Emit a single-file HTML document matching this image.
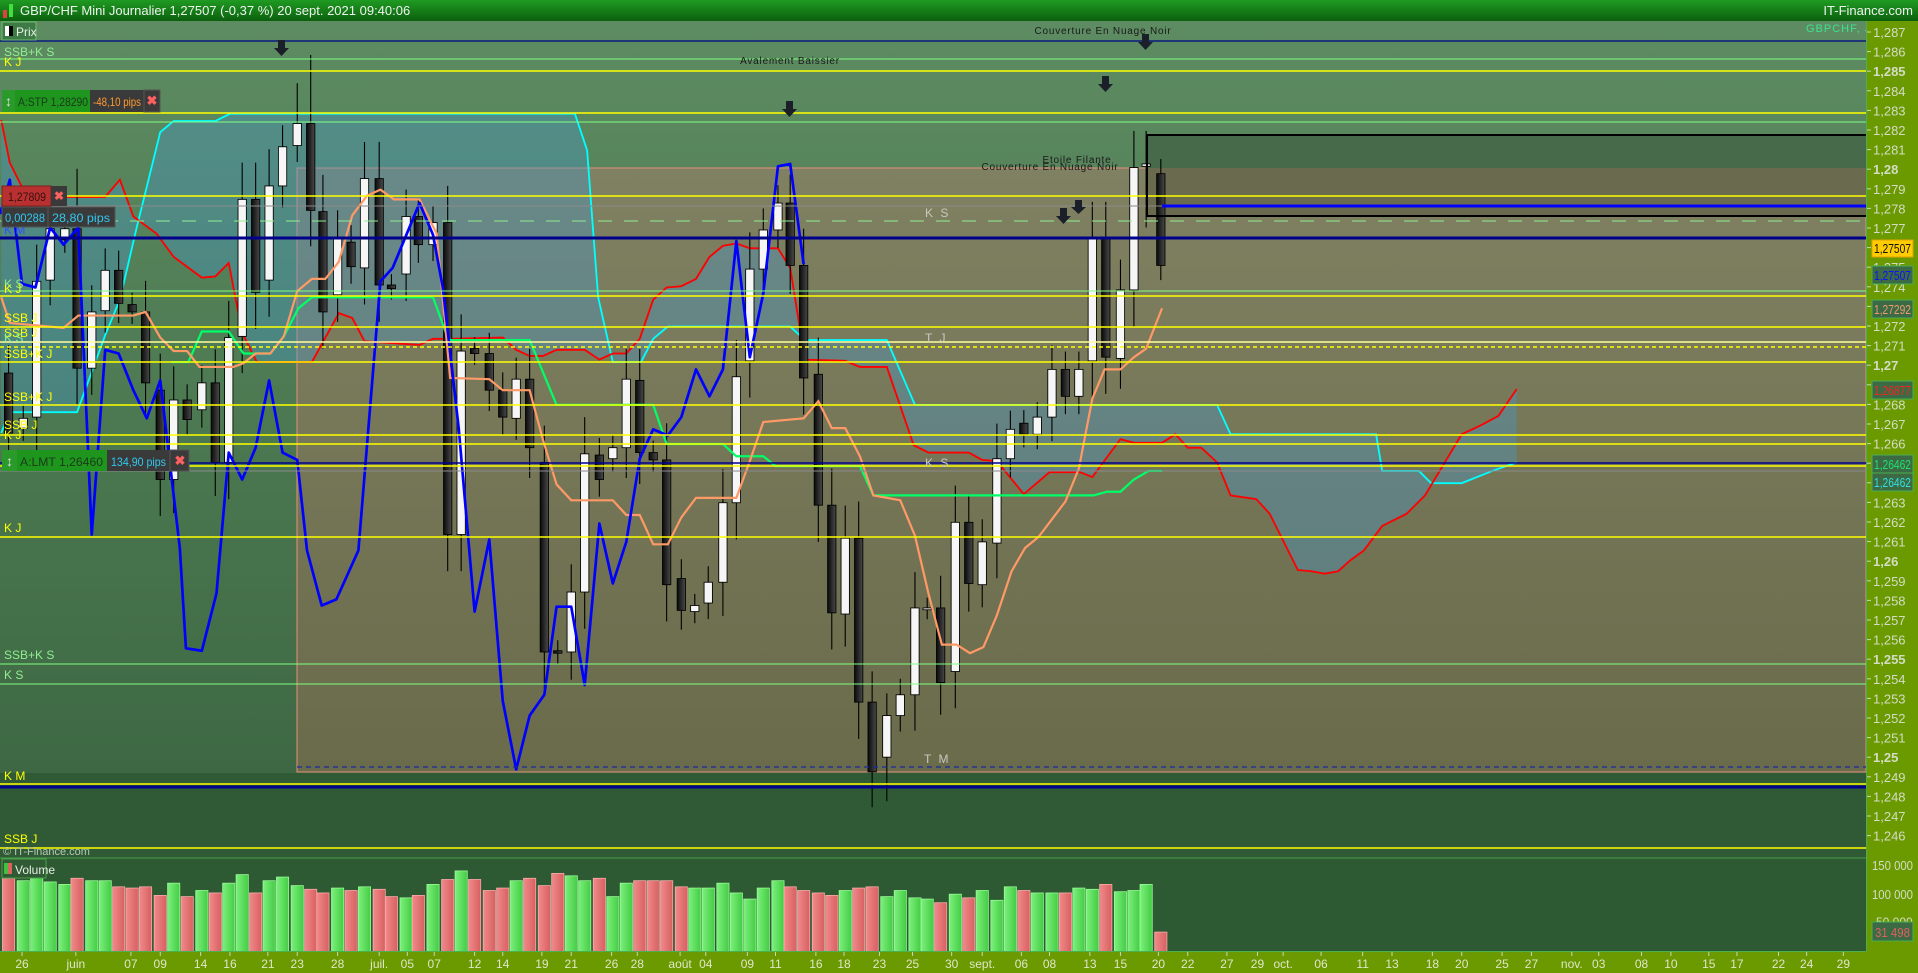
<!DOCTYPE html>
<html><head><meta charset="utf-8"><style>
html,body{margin:0;padding:0;width:1918px;height:973px;overflow:hidden;background:#2e5a33;font-family:"Liberation Sans",sans-serif}
svg{display:block}
</style></head><body>
<svg id="s" width="1918" height="973" viewBox="0 0 1918 973" xmlns="http://www.w3.org/2000/svg" font-family="Liberation Sans, sans-serif">
<defs>
<linearGradient id="tb" x1="0" y1="0" x2="0" y2="1"><stop offset="0" stop-color="#1f9a22"/><stop offset="1" stop-color="#0c600e"/></linearGradient>
<linearGradient id="bg" x1="0" y1="0" x2="0" y2="1"><stop offset="0" stop-color="#5e8c62"/><stop offset="1" stop-color="#3d6843"/></linearGradient>
<linearGradient id="ol" x1="0" y1="0" x2="0" y2="1"><stop offset="0" stop-color="#7f8162"/><stop offset="1" stop-color="#6a6b4b"/></linearGradient>
<linearGradient id="bk" x1="0" y1="0" x2="1" y2="0"><stop offset="0" stop-color="#0a0a0a"/><stop offset="1" stop-color="#4a4a4a"/></linearGradient>
<linearGradient id="vr" x1="0" y1="0" x2="1" y2="0"><stop offset="0" stop-color="#f08a8a"/><stop offset="1" stop-color="#d86060"/></linearGradient>
<linearGradient id="vg" x1="0" y1="0" x2="1" y2="0"><stop offset="0" stop-color="#7cf07c"/><stop offset="1" stop-color="#44cc44"/></linearGradient>
</defs>
<rect x="0" y="0" width="1918" height="21" fill="url(#tb)"/>
<rect x="3" y="10" width="4" height="8" fill="#e04040"/><rect x="9" y="4" width="4" height="13" fill="#40e040"/>
<text x="20" y="15" font-size="13" fill="#eef4ee">GBP/CHF Mini Journalier 1,27507 (-0,37 %) 20 sept. 2021 09:40:06</text>
<text x="1913" y="15" font-size="13" fill="#eef4ee" text-anchor="end">IT-Finance.com</text>
<rect x="0" y="21" width="1866" height="752" fill="url(#bg)"/>
<rect x="0" y="773" width="1866" height="85" fill="#2f5a35"/>
<rect x="297" y="168" width="1569" height="604" fill="url(#ol)" stroke="#e8907a" stroke-width="1"/>
<rect x="1147" y="136" width="719" height="32" fill="#476a4a"/>
<rect x="1147" y="168" width="719" height="48" fill="#6a6a4e"/>
<g id="ind" transform="scale(1.2232)"></g>
<g fill="none">
<line x1="0" y1="41" x2="1866" y2="41" stroke="#0a1a80" stroke-width="1.5"/>
<line x1="0" y1="59" x2="1866" y2="59" stroke="#80ff80"/>
<line x1="0" y1="71" x2="1866" y2="71" stroke="#ffff00" stroke-width="1.5"/>
<line x1="0" y1="113" x2="1866" y2="113" stroke="#ffff00" stroke-width="1.5"/>
<line x1="0" y1="122" x2="1866" y2="122" stroke="#80ff80"/>
<line x1="0" y1="196" x2="1866" y2="196" stroke="#ffff00" stroke-width="1.5"/>
<line x1="0" y1="206" x2="1866" y2="206" stroke="#8a8a8a"/>
<line x1="1162" y1="206" x2="1866" y2="206" stroke="#0000ff" stroke-width="3"/>
<line x1="0" y1="221" x2="1866" y2="221" stroke="#90ee90" stroke-dasharray="14,12"/>
<line x1="0" y1="238" x2="1866" y2="238" stroke="#00008b" stroke-width="3"/>
<line x1="0" y1="291" x2="1866" y2="291" stroke="#80ff80"/>
<line x1="0" y1="296" x2="1866" y2="296" stroke="#ffff00" stroke-width="1.5"/>
<line x1="0" y1="327" x2="1866" y2="327" stroke="#ffff00" stroke-width="1.5"/>
<line x1="0" y1="342" x2="1866" y2="342" stroke="#ffff99" stroke-width="1.5"/>
<line x1="0" y1="347" x2="1866" y2="347" stroke="#ffff00" stroke-width="1.5" stroke-dasharray="4,3"/>
<line x1="0" y1="362" x2="1866" y2="362" stroke="#ffff00" stroke-width="1.5"/>
<line x1="0" y1="405" x2="1866" y2="405" stroke="#ffff00" stroke-width="1.5"/>
<line x1="0" y1="435" x2="1866" y2="435" stroke="#ffff00" stroke-width="1.5"/>
<line x1="0" y1="444" x2="1866" y2="444" stroke="#ffff00" stroke-width="1.5"/>
<line x1="0" y1="463" x2="1866" y2="463" stroke="#00008b" stroke-width="1.5"/>
<line x1="0" y1="466" x2="1866" y2="466" stroke="#ffff00" stroke-width="1.5"/>
<line x1="0" y1="471" x2="1866" y2="471" stroke="#8a8a8a"/>
<line x1="0" y1="537" x2="1866" y2="537" stroke="#ffff00" stroke-width="1.5"/>
<line x1="0" y1="664" x2="1866" y2="664" stroke="#80ff80"/>
<line x1="0" y1="684" x2="1866" y2="684" stroke="#80ff80"/>
<line x1="297" y1="767" x2="1866" y2="767" stroke="#1a2aa0" stroke-width="1.2" stroke-dasharray="5,4"/>
<line x1="0" y1="784" x2="1866" y2="784" stroke="#ffff00" stroke-width="1.5"/>
<line x1="0" y1="787" x2="1866" y2="787" stroke="#00008b" stroke-width="3"/>
<line x1="0" y1="848" x2="1866" y2="848" stroke="#ffff00" stroke-width="1.5"/>
<line x1="0" y1="858" x2="1866" y2="858" stroke="#4aa04a"/>
<rect x="1147" y="135" width="725" height="81" fill="none" stroke="#000" stroke-width="2"/>
</g>
<g font-size="12">
<text x="4" y="56" fill="#90ee90">SSB+K S</text>
<text x="4" y="66" fill="#ffff00">K J</text>
<text x="4" y="234" fill="#3050ff">K M</text>
<text x="4" y="288" fill="#90ee90">K S</text>
<text x="4" y="293" fill="#ffff00">K J</text>
<text x="4" y="322" fill="#ffff00">SSB J</text>
<text x="4" y="337" fill="#ffff00">SSB J</text>
<text x="4" y="342" fill="#90ee90">K S</text>
<text x="4" y="358" fill="#ffff00">SSB+K J</text>
<text x="4" y="401" fill="#ffff00">SSB+K J</text>
<text x="4" y="429" fill="#ffff00">SSB J</text>
<text x="4" y="439" fill="#ffff00">K J</text>
<text x="4" y="532" fill="#ffff00">K J</text>
<text x="4" y="659" fill="#90ee90">SSB+K S</text>
<text x="4" y="679" fill="#90ee90">K S</text>
<text x="4" y="780" fill="#ffff00">K M</text>
<text x="4" y="843" fill="#ffff00">SSB J</text>
</g>
<text x="3" y="855" font-size="11" fill="#b8c8b8">© IT-Finance.com</text>
<g font-size="12" fill="#c8c8c0" letter-spacing="2">
<text x="925" y="217">K S</text><text x="925" y="342">T J</text><text x="925" y="467">K S</text><text x="924" y="763">T M</text>
</g>
<g font-size="10" fill="#1a1a1a" letter-spacing="0.8">
<text x="1103" y="34" text-anchor="middle">Couverture En Nuage Noir</text>
<text x="790" y="64" text-anchor="middle">Avalement Baissier</text>
<text x="1077" y="163" text-anchor="middle">Etoile Filante</text>
<text x="1050" y="170" text-anchor="middle">Couverture En Nuage Noir</text>
</g>
<g fill="#1a1f2a">
<path d="M278 40h7v8h4l-7.5 8-7.5-8h4z"/>
<path d="M786 101h7v8h4l-7.5 8-7.5-8h4z"/>
<path d="M1102 76h7v8h4l-7.5 8-7.5-8h4z"/>
<path d="M1142 34h7v8h4l-7.5 8-7.5-8h4z"/>
<path d="M1060 208h7v8h4l-7.5 8-7.5-8h4z"/>
<path d="M1075 200h7v7h4l-7.5 7-7.5-7h4z"/>
</g>
<text x="1806" y="32" font-size="11" fill="#40e090" letter-spacing="1">GBPCHF, J</text>
<rect x="2" y="22" width="34" height="18" fill="#3d7a45" stroke="#6cbf6c"/>
<rect x="5" y="26" width="4" height="10" fill="#fff"/><rect x="9" y="26" width="4" height="10" fill="#000"/>
<text x="16" y="36" font-size="12" fill="#e8f0e8">Prix</text>
<rect x="2" y="90" width="13" height="22" fill="#2a9a2a"/>
<text x="8.5" y="106" font-size="14" fill="#ddd" text-anchor="middle">↕</text>
<rect x="15" y="90" width="75" height="22" fill="#1e961e"/>
<text x="18" y="106" font-size="12" fill="#1a3a1a" textLength="70" lengthAdjust="spacingAndGlyphs">A:STP   1,28290</text>
<rect x="90" y="90" width="54" height="22" fill="#3a3a3a"/>
<text x="93" y="106" font-size="12" fill="#ff9a30" textLength="48" lengthAdjust="spacingAndGlyphs">-48,10 pips</text>
<rect x="144" y="90" width="16" height="22" fill="#3a3a3a" stroke="#555"/>
<text x="152" y="105" font-size="13" fill="#ff6060" text-anchor="middle" font-weight="bold">✖</text>
<rect x="2" y="186" width="49" height="20" fill="#b83030" stroke="#802020"/>
<text x="8" y="201" font-size="12" fill="#3a1010" textLength="38" lengthAdjust="spacingAndGlyphs">1,27809</text>
<rect x="51" y="186" width="16" height="20" fill="#3a3a3a"/>
<text x="59" y="200" font-size="12" fill="#ff6060" text-anchor="middle" font-weight="bold">✖</text>
<rect x="2" y="207" width="113" height="20" fill="#3a3a3a" stroke="#555"/>
<line x1="48" y1="207" x2="48" y2="227" stroke="#555"/>
<text x="5" y="222" font-size="12" fill="#30c8f0" textLength="40" lengthAdjust="spacingAndGlyphs">0,00288</text>
<text x="52" y="222" font-size="12" fill="#30c8f0" textLength="58" lengthAdjust="spacingAndGlyphs">28,80 pips</text>
<rect x="2" y="450" width="15" height="21" fill="#2a9a2a"/>
<text x="9.5" y="466" font-size="14" fill="#ddd" text-anchor="middle">↕</text>
<rect x="17" y="450" width="90" height="21" fill="#1e961e"/>
<text x="20" y="466" font-size="12" fill="#1a3a1a" textLength="83" lengthAdjust="spacingAndGlyphs">A:LMT   1,26460</text>
<rect x="107" y="450" width="63" height="21" fill="#3a3a3a"/>
<text x="111" y="466" font-size="12" fill="#30c8f0" textLength="55" lengthAdjust="spacingAndGlyphs">134,90 pips</text>
<rect x="170" y="450" width="19" height="21" fill="#3a3a3a" stroke="#555"/>
<text x="180" y="465" font-size="13" fill="#ff6060" text-anchor="middle" font-weight="bold">✖</text>
<rect x="2" y="859" width="44" height="19" fill="#2f5a33" stroke="#4aa04a"/>
<rect x="4" y="863" width="4" height="11" fill="#40c040"/><rect x="8" y="863" width="4" height="11" fill="#e06060"/>
<text x="15" y="874" font-size="12" fill="#e8f0e8">Volume</text>
<rect x="1866" y="21" width="52" height="952" fill="#6b9a00"/>
<line x1="1866.5" y1="21" x2="1866.5" y2="951" stroke="#4caf50"/>
<rect x="0" y="951" width="1918" height="22" fill="#6b9a00"/>
<line x1="0" y1="951.5" x2="1866" y2="951.5" stroke="#4caf50"/>
<g id="pax" font-size="13" fill="#d4dcc4"></g>
<g font-size="13">
<rect x="1872" y="240" width="41" height="17" fill="#ffcc00" stroke="#e0a000"/><text x="1874" y="253" fill="#111" textLength="37" lengthAdjust="spacingAndGlyphs">1,27507</text>
<rect x="1872" y="266" width="41" height="18" fill="#3b6a44" stroke="#4caf50"/><text x="1874" y="280" fill="#1010ff" textLength="37" lengthAdjust="spacingAndGlyphs">1,27507</text>
<rect x="1872" y="300" width="41" height="18" fill="#3b6a44" stroke="#4caf50"/><text x="1874" y="314" fill="#f09a70" textLength="37" lengthAdjust="spacingAndGlyphs">1,27292</text>
<rect x="1872" y="381" width="41" height="18" fill="#3b6a44" stroke="#4caf50"/><text x="1874" y="395" fill="#ff2020" textLength="37" lengthAdjust="spacingAndGlyphs">1,26877</text>
<rect x="1872" y="455" width="41" height="18" fill="#3b6a44" stroke="#4caf50"/><text x="1874" y="469" fill="#20e070" textLength="37" lengthAdjust="spacingAndGlyphs">1,26462</text>
<rect x="1872" y="473" width="41" height="18" fill="#3b6a44" stroke="#4caf50"/><text x="1874" y="487" fill="#30e0e0" textLength="37" lengthAdjust="spacingAndGlyphs">1,26462</text>
<text x="1872" y="870" fill="#d4dcc4" textLength="41" lengthAdjust="spacingAndGlyphs">150 000</text>
<text x="1872" y="899" fill="#d4dcc4" textLength="41" lengthAdjust="spacingAndGlyphs">100 000</text>
<text x="1876" y="926" fill="#d4dcc4" font-size="12">50 000</text>
<rect x="1872" y="922" width="41" height="19" fill="#3b6a44" stroke="#4caf50"/><text x="1875" y="937" fill="#e06060" textLength="35" lengthAdjust="spacingAndGlyphs">31 498</text>
</g>
<g id="dax" font-size="12" fill="#dfe6c8" text-anchor="middle"></g>
</svg>
<script>
var NS="http://www.w3.org/2000/svg";
function el(p,t,a,txt){var e=document.createElementNS(NS,t);for(var k in a)e.setAttribute(k,a[k]);if(txt)e.textContent=txt;p.appendChild(e);return e;}
var g=document.getElementById("ind");
var red="1,98 8,133 22,161 86,161 98,147 109,177 128,191 142,210 165,227 176,226 187,215 198,272 210,296 255,296 277,256 288,260 298,279 343,282 354,277 368,277 411,276 422,286 433,291 444,291 455,286 478,286 490,294 501,289 512,289 523,277 534,245 545,235 557,234 569,228 580,210 591,201 602,199 613,203 636,203 646,219 658,294 691,295 703,300 725,300 736,332 747,364 759,370 792,370 803,376 815,377 837,404 858,386 883,386 893,390 916,359 927,362 950,362 961,355 971,366 982,366 995,378 1006,405 1027,408 1038,420 1061,466 1072,467 1083,469 1094,467 1104,458 1115,450 1130,430 1150,420 1165,405 1180,380 1195,355 1210,348 1225,340 1240,318";
var cyan="1,354 8,337 63,337 86,274 98,245 112,185 131,108 142,99 176,99 188,93 470,93 480,123 485,190 489,243 501,296 524,296 534,277 546,267 646,267 658,278 725,278 748,331 995,331 1006,355 1125,355 1130,385 1160,385 1170,395 1195,395 1220,385 1240,378";
var orange="1,243 8,264 52,268 64,258 109,258 119,255 131,276 142,287 153,287 163,300 191,300 199,297 209,289 221,289 232,275 243,238 255,228 266,228 277,214 288,176 300,160 311,155 322,163 343,163 357,191 368,309 400,310 411,319 433,319 444,360 455,396 467,409 501,409 512,421 523,421 534,445 546,445 557,423 569,407 602,407 613,377 624,345 657,342 669,328 680,350 691,350 703,373 714,405 736,409 748,438 759,485 770,527 782,527 793,534 804,529 815,503 827,467 838,448 849,439 871,410 882,383 893,326 903,302 916,302 927,292 937,285 950,252";
var green="140,296 154,296 165,271 187,271 199,289 221,289 232,275 244,252 255,243 354,243 366,276 368,278 433,278 455,331 534,331 545,363 591,363 602,373 624,373 634,381 703,381 714,405 894,405 905,402 916,402 927,392 939,385 950,385";
var blue="0,175 8,147 18,232 29,235 41,186 52,200 64,186 75,437 86,286 97,289 109,319 120,342 131,311 147,448 152,530 165,532 177,485 187,370 198,392 209,366 220,311 231,370 243,376 251,450 263,495 275,490 293,450 311,230 321,219 343,166 354,192 362,235 375,350 388,500 400,441 411,573 422,629 433,585 445,568 455,496 467,496 478,560 490,428 501,477 512,443 523,375 534,351 546,356 557,341 569,302 580,324 591,302 602,197 613,292 624,240 636,136 646,134 657,216";
var rp=red.split(" ").reverse().join(" ");
el(g,"polygon",{points:cyan+" "+rp,fill:"rgba(70,150,200,0.38)"});
el(g,"polyline",{points:cyan,fill:"none",stroke:"#00ffff","stroke-width":1.5});
el(g,"polyline",{points:red,fill:"none",stroke:"#ff0000","stroke-width":1.5});
var C=[[7,305,354,0],[19,342,350,1],[30,230,341,1],[41,187,229,1],[53,187,196,1],[63,187,301,0,138],[75,255,301,1],[86,221,254,1],[97,221,248,0],[108,249,255,0],[119,255,313,0],[131,319,392,0],[142,327,392,1],[153,327,343,0],[165,313,335,1],[176,313,378,0],[187,276,378,1],[198,163,275,1],[209,163,239,0],[220,152,229,1],[231,120,152,1],[243,101,119,1,68],[254,101,172,0,45],[264,173,255,0],[276,194,241,1],[287,198,218,0],[298,146,219,1],[310,146,233,0],[320,233,236,0],[332,177,224,1],[342,177,200,0],[354,182,200,1],[366,182,437,0],[377,287,437,1],[388,285,289,0],[400,289,319,0],[411,319,341,0],[422,310,342,1],[433,310,366,0],[445,378,533,0],[456,532,534,0],[467,484,533,1],[478,371,484,1],[490,372,392,0],[501,366,375,1],[512,310,366,1],[523,311,370,0],[534,370,376,0],[545,376,478,0],[557,473,499,0],[568,495,500,1],[579,476,493,1],[591,411,476,1],[602,308,411,1],[613,220,295,1],[624,188,220,1],[636,166,188,1],[646,166,217,0],[657,217,309,0],[669,306,413,0],[680,413,501,0],[691,440,502,1],[702,440,574,0],[713,574,631,0,0,660],[725,585,619,1,0,655],[736,568,585,1],[748,497,568,1],[758,497,498,1],[769,497,558,0],[781,427,549,1],[792,427,477,0],[803,443,478,1],[815,375,444,1],[826,351,375,1],[837,346,355,0],[848,341,355,1],[860,302,341,1],[871,302,324,0],[882,302,324,1],[893,195,295,1],[904,195,292,0],[916,237,293,1],[927,137,237,1],[937,134,136,1,107,186],[949,142,217,0,130,229]];
var V=[718,720,717,721,723,718,720,720,725,726,725,732,722,733,728,730,722,715,730,720,717,724,727,730,726,728,725,727,733,734,732,723,719,712,719,728,726,720,718,724,714,716,720,718,733,722,720,720,720,725,726,726,722,730,735,726,720,725,728,730,732,728,726,725,733,728,734,735,738,731,734,728,736,725,728,730,730,730,726,727,723,729,728,723,762];
C.forEach(function(c,i){
 var wt=c[4]||c[1]-Math.max(6,Math.min(30,(c[2]-c[1])*0.3+8)),wb=c[5]||c[2]+Math.max(6,Math.min(30,(c[2]-c[1])*0.3+8));
 el(g,"line",{x1:c[0],y1:wt,x2:c[0],y2:wb,stroke:"#000","stroke-width":0.9});
 var h=Math.max(1.5,c[2]-c[1]);
 el(g,"rect",{x:c[0]-3.4,y:c[1],width:6.8,height:h,fill:c[3]?"#f6f6f6":"url(#bk)",stroke:"#000","stroke-width":0.7});
 var t=(i==C.length-1)?762:(V[i]||728);
 el(g,"rect",{x:c[0]-5,y:t,width:10,height:778-t,fill:c[3]?"url(#vg)":"url(#vr)",stroke:c[3]?"#9cff9c":"#ffb0b0","stroke-width":0.6});
});
el(g,"polyline",{points:green,fill:"none",stroke:"#00ff66","stroke-width":1.8});
el(g,"polyline",{points:orange,fill:"none",stroke:"#ff9966","stroke-width":1.8});
el(g,"polyline",{points:blue,fill:"none",stroke:"#0000ff","stroke-width":2.2,"stroke-linejoin":"round"});
var pax=document.getElementById("pax");
for(var k=0;k<=41;k++){var p=1.287-k*0.001,y=32+k*19.6;
 var s=(Math.round(p*1000)/1000).toFixed(3).replace(/0+$/,"").replace(".",",");
 var bold=[1.285,1.28,1.27,1.26,1.255,1.25].some(function(v){return Math.abs(v-p)<1e-6});
 el(pax,"line",{x1:1867,y1:y,x2:1871,y2:y,stroke:"#c8d4b8"});
 el(pax,"text",{x:1873,y:y+5,"font-weight":bold?"bold":"normal"},s);}
var D=[[18,"26"],[62,"juin"],[107,"07"],[131,"09"],[164,"14"],[188,"16"],[219,"21"],[243,"23"],[276,"28"],[310,"juil."],[333,"05"],[355,"07"],[388,"12"],[411,"14"],[443,"19"],[467,"21"],[500,"26"],[521,"28"],[556,"août"],[577,"04"],[611,"09"],[634,"11"],[667,"16"],[690,"18"],[719,"23"],[746,"25"],[778,"30"],[803,"sept."],[835,"06"],[858,"08"],[891,"13"],[916,"15"],[947,"20"],[971,"22"],[1003,"27"],[1028,"29"],[1049,"oct."],[1080,"06"],[1114,"11"],[1138,"13"],[1171,"18"],[1195,"20"],[1228,"25"],[1252,"27"],[1285,"nov."],[1307,"03"],[1342,"08"],[1366,"10"],[1397,"15"],[1420,"17"],[1454,"22"],[1477,"24"],[1507,"29"]];
var dax=document.getElementById("dax");
D.forEach(function(d){var x=d[0]*1.2232;el(dax,"line",{x1:x,y1:952,x2:x,y2:956,stroke:"#c8d4b8"});el(dax,"text",{x:x,y:968},d[1]);});
</script>
</body></html>
